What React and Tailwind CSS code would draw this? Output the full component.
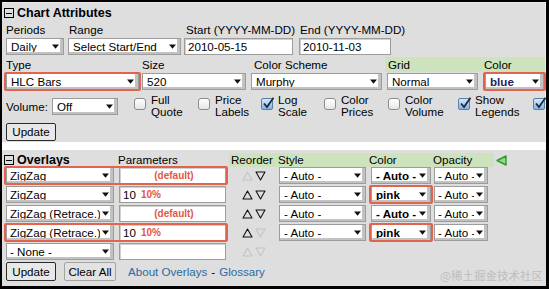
import React from "react";

const Arrow = () => (
  <svg width="7" height="5" viewBox="0 0 7 5">
    <path d="M0 0.5H7L3.5 4.8Z" fill="#111" />
  </svg>
);

function Sel({ w, text, bold, tc, pl = "pl-[4px]" }) {
  return (
    <div
      className={`flex items-center h-[17px] bg-white border border-[#9c9c9c] shadow-[inset_-3px_-2px_0_#c2c2c2] ${w}`}
    >
      <span
        className={`flex-1 overflow-hidden whitespace-nowrap text-[11.6px] leading-none ${pl} ${
          bold ? "font-bold" : ""
        } ${tc || "text-black"}`}
      >
        {text}
      </span>
      <span className="w-[13px] shrink-0 flex justify-center pr-[2px]">
        <Arrow />
      </span>
    </div>
  );
}

function Inp({ w, children, center }) {
  return (
    <div
      className={`flex items-center h-[17px] bg-white border border-[#9c9c9c] shadow-[inset_1px_1px_0_#d0d0d0] text-[11.6px] leading-none pl-[3px] ${
        center ? "justify-center" : ""
      } ${w}`}
    >
      {children}
    </div>
  );
}

function Red({ children }) {
  return (
    <div className="relative flex items-center">
      {children}
      <div className="absolute -left-[2px] -right-[2px] -top-[1px] -bottom-[1px] border-2 border-[#e2644f] rounded-[2px] pointer-events-none" />
    </div>
  );
}

function Cb({ checked }) {
  if (checked)
    return (
      <span className="relative w-[12px] h-[12px] shrink-0 rounded-[2px] border border-[#5b7ea6] bg-linear-to-b from-[#d6e8fa] to-[#86b2e2]">
        <svg className="absolute -top-[2px] left-[0px]" width="13" height="13" viewBox="0 0 13 13">
          <path d="M2 6.5 L5 10 L11.5 0.8" stroke="#1b2a3c" strokeWidth="1.8" fill="none" />
        </svg>
      </span>
    );
  return (
    <span className="w-[12px] h-[12px] shrink-0 rounded-[3px] border border-[#8c8c8c] bg-linear-to-b from-white to-[#e6e6e6]" />
  );
}

function CbGroup({ w, checked, l1, l2 }) {
  return (
    <div className={`flex items-start ${w}`}>
      <span className="mt-[4px] flex">
        <Cb checked={checked} />
      </span>
      {l1 && (
        <span className="ml-[5px] leading-[12px] text-[11.6px]">
          {l1}
          <br />
          {l2}
        </span>
      )}
    </div>
  );
}

const MinusBox = () => (
  <span className="w-[10px] h-[10px] border border-black flex items-center justify-center">
    <span className="w-[6px] h-[1px] bg-black" />
  </span>
);

function Tri({ up, on }) {
  return (
    <svg width="11" height="10" viewBox="0 0 11 10">
      <path
        d={up ? "M5.5 1 L10 9 L1 9 Z" : "M1 1 L10 1 L5.5 9 Z"}
        fill="none"
        stroke={on ? "#111" : "#c4c4c4"}
        strokeWidth="1.1"
        strokeLinejoin="round"
      />
    </svg>
  );
}

const Def = () => (
  <span className="text-[#e2564a] font-bold text-[10px]">(default)</span>
);
const Ten = () => (
  <span className="flex items-center">
    <span className="text-[11.6px]">10</span>
    <span className="ml-[5px] text-[#e2564a] font-bold text-[10px]">10%</span>
  </span>
);

const rows = [
  { ov: "ZigZag", p: "def", up: false, down: true, color: "- Auto -", r1: true, rc: false },
  { ov: "ZigZag", p: "ten", up: true, down: true, color: "pink", r1: false, rc: true },
  { ov: "ZigZag (Retrace.)", p: "def", up: true, down: true, color: "- Auto -", r1: false, rc: false },
  { ov: "ZigZag (Retrace.)", p: "ten", up: true, down: false, color: "pink", r1: true, rc: true },
  { ov: "- None -", p: "", up: false, down: false, color: null, r1: false, rc: false },
];

export default function App() {
  return (
    <div className="w-[549px] h-[289px] bg-black pt-[2px] pl-[2px] pr-[3px] pb-[3px] font-['Liberation_Sans','Arial',sans-serif] text-black text-[11.6px]">
      <div className="w-full h-full bg-white flex flex-col">
        {/* Chart Attributes panel */}
        <div className="h-[140px] bg-[#dedede] border-t border-r border-[#ececec] pl-[4px] pt-[1px] flex flex-col">
          <div className="h-[18px] flex items-center gap-[3px] -ml-[2px]">
            <MinusBox />
            <span className="font-bold text-[12.5px]">Chart Attributes</span>
          </div>
          <div className="h-[15px] flex items-center">
            <span className="w-[63px]">Periods</span>
            <span className="w-[117px]">Range</span>
            <span className="w-[114px]">Start (YYYY-MM-DD)</span>
            <span>End (YYYY-MM-DD)</span>
          </div>
          <div className="h-[17px] mt-[1px] flex items-center">
            <Sel w="w-[58px]" text="Daily" />
            <div className="ml-[4px]">
              <Sel w="w-[113px]" text="Select Start/End" />
            </div>
            <div className="ml-[3px]">
              <Inp w="w-[109px]">2010-05-15</Inp>
            </div>
            <div className="ml-[6px]">
              <Inp w="w-[92px]">2010-11-03</Inp>
            </div>
          </div>
          <div className="h-[15px] mt-[2px] flex items-center">
            <span className="w-[136px]">Type</span>
            <span className="w-[112px]">Size</span>
            <span className="w-[131px]">Color Scheme</span>
            <span className="w-[98px] h-full bg-[#cde3bd] pl-[3px] flex items-center">Grid</span>
            <span className="w-[62px] h-full bg-[#cde3bd] pl-[1px] flex items-center">Color</span>
          </div>
          <div className="h-[17px] mt-[1px] flex items-center">
            <Red>
              <Sel w="w-[133px]" text="HLC Bars" />
            </Red>
            <div className="ml-[3px]">
              <Sel w="w-[104px]" text="520" />
            </div>
            <div className="ml-[5px]">
              <Sel w="w-[131px]" text="Murphy" />
            </div>
            <div className="ml-[5px]">
              <Sel w="w-[91px]" text="Normal" />
            </div>
            <div className="ml-[7px]">
              <Red>
                <Sel w="w-[59px]" text="blue" bold tc="text-[#23235a]" />
              </Red>
            </div>
          </div>
          <div className="h-[27px] mt-[4px] flex items-start">
            <div className="flex items-center mt-[4px]">
              <span className="w-[46px]">Volume:</span>
              <Sel w="w-[66px]" text="Off" />
            </div>
            <div className="ml-[16px] flex">
              <CbGroup w="w-[64px]" l1="Full" l2="Quote" />
              <CbGroup w="w-[63px]" l1="Price" l2="Labels" />
              <CbGroup w="w-[63px]" checked l1="Log" l2="Scale" />
              <CbGroup w="w-[64px]" l1="Color" l2="Prices" />
              <CbGroup w="w-[70px]" l1="Color" l2="Volume" />
              <CbGroup w="w-[75px]" checked l1="Show" l2="Legends" />
              <CbGroup w="w-[12px]" checked />
            </div>
          </div>
          <div className="mt-[2px] flex">
            <button className="h-[18px] w-[50px] border border-[#2a2a2a] bg-[#e8e8e8] rounded-[2px] text-[11.6px] leading-none">
              Update
            </button>
          </div>
        </div>

        <div className="h-[8px]" />

        {/* Overlays panel */}
        <div className="relative flex-1 bg-[#dedede] pl-[4px] pt-[3px] flex flex-col">
          <div className="h-[14px] flex items-center">
            <div className="w-[114px] flex items-center gap-[3px] -ml-[2px]">
              <MinusBox />
              <span className="font-bold text-[12.5px]">Overlays</span>
            </div>
            <span className="w-[111px]">Parameters</span>
            <div className="w-[265px] h-full bg-[#cde3bd] flex items-center">
              <span className="w-[49px] pl-[2px]">Reorder</span>
              <span className="w-[91px]">Style</span>
              <span className="w-[64px]">Color</span>
              <span>Opacity</span>
            </div>
            <svg className="ml-[2px]" width="11" height="11" viewBox="0 0 11 11">
              <path d="M1 5.5 L10 1 L10 10 Z" fill="#8fdc86" stroke="#2f9b2c" strokeWidth="1.4" strokeLinejoin="round" />
            </svg>
          </div>
          <div className="flex flex-col gap-[2px]">
            {rows.map((r, i) => {
              const left = (
                <div className="flex items-center">
                  <Sel w="w-[108px]" text={r.ov} pl="pl-[3px]" />
                  <div className="ml-[5px]">
                    <Inp w="w-[107px]" center={r.p === "def"}>
                      {r.p === "def" ? <Def /> : r.p === "ten" ? <Ten /> : null}
                    </Inp>
                  </div>
                </div>
              );
              const colorSel = r.color ? (
                <Sel w="w-[60px]" text={r.color} bold />
              ) : null;
              return (
                <div key={i} className="h-[17px] flex items-center">
                  {r.r1 ? <Red>{left}</Red> : left}
                  <div className="w-[53px] flex items-center pl-[16px] gap-[2px]">
                    <Tri up on={r.up} />
                    <Tri on={r.down} />
                  </div>
                  {r.color && (
                    <>
                      <Sel w="w-[87px]" text="- Auto -" />
                      <div className="ml-[5px]">{r.rc ? <Red>{colorSel}</Red> : colorSel}</div>
                      <div className="ml-[3px]">
                        <Sel w="w-[54px]" text="- Auto -" pl="pl-[3px]" />
                      </div>
                    </>
                  )}
                </div>
              );
            })}
          </div>
          <div className="mt-[2px] flex items-center">
            <button className="h-[19px] w-[50px] border border-[#2a2a2a] bg-[#e8e8e8] rounded-[2px] text-[11.6px] leading-none">
              Update
            </button>
            <button className="ml-[8px] h-[19px] w-[52px] border border-[#a4a4a4] bg-[#e2e2e2] rounded-[2px] text-[11.6px] leading-none">
              Clear All
            </button>
            <span className="ml-[12px] text-[#2d6aa3]">About Overlays</span>
            <span className="mx-[4px]">-</span>
            <span className="text-[#2d6aa3]">Glossary</span>
          </div>
          <span className="absolute right-[3px] bottom-[2px] text-[11.5px] text-[#bdbdbd] font-['Noto_Sans_CJK_SC',sans-serif]">
            @稀土掘金技术社区
          </span>
        </div>
      </div>
    </div>
  );
}
